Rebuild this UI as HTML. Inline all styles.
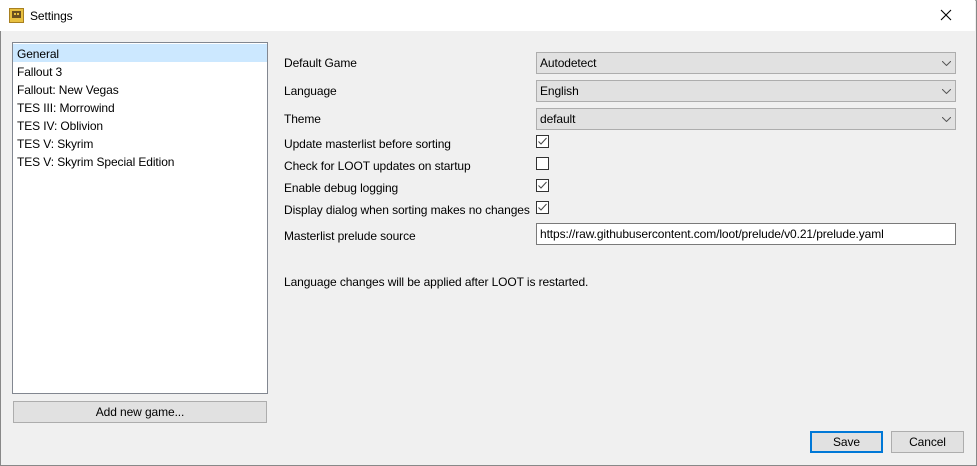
<!DOCTYPE html><html><head><style>
*{margin:0;padding:0;box-sizing:border-box}
body{width:977px;height:466px;font-family:"Liberation Sans",sans-serif;font-size:12px;color:#000;position:relative;overflow:hidden;background:#f0f0f0;letter-spacing:-0.1px}
.win{position:absolute;left:0;top:0;width:977px;height:466px;border:1px solid #888;border-top:1px solid #aaa}
.title{position:absolute;left:0;top:0;width:975px;height:31px;background:#fff}
.a{position:absolute;white-space:nowrap}
.lb{position:absolute;left:12px;top:42px;width:256px;height:352px;background:#fff;border:1px solid #828790;padding-top:1px}
.lb div{height:18px;line-height:20px;padding-left:4px}
.btn{position:absolute;background:#e1e1e1;border:1px solid #adadad;text-align:center;line-height:20px}
.cb{position:absolute;left:536px;height:22px;background:#e1e1e1;border:1px solid #adadad;line-height:20px;padding-left:3px;width:420px}
.cb svg{position:absolute;right:4px;top:8px}
.ck{position:absolute;left:536px;width:13px;height:13px;border:1px solid #333;background:#fff}
</style></head><body>
<div class="win"></div>
<div class="title">
<svg class="a" style="left:9px;top:8px" width="15" height="15"><rect x="0.5" y="0.5" width="14" height="14" fill="#e8c040" stroke="#a88020"/><rect x="3" y="3" width="9" height="7" fill="#6a5020"/><rect x="5" y="5" width="2" height="2" fill="#e8c040"/><rect x="8" y="5" width="2" height="2" fill="#e8c040"/></svg>
<div class="a" style="left:30px;top:9px">Settings</div>
<svg class="a" style="left:940px;top:9px" width="12" height="12"><path d="M1 1L11 11M11 1L1 11" stroke="#000" stroke-width="1.1"/></svg>
</div>
<div class="lb">
<div style="background:#cce8ff">General</div><div>Fallout 3</div><div>Fallout: New Vegas</div><div>TES III: Morrowind</div><div>TES IV: Oblivion</div><div>TES V: Skyrim</div><div>TES V: Skyrim Special Edition</div>
</div>
<div class="btn" style="left:13px;top:401px;width:254px;height:22px">Add new game...</div>
<div class="a" style="left:284px;top:56px">Default Game</div>
<div class="a" style="left:284px;top:84px">Language</div>
<div class="a" style="left:284px;top:112px">Theme</div>
<div class="a" style="left:284px;top:137px">Update masterlist before sorting</div>
<div class="a" style="left:284px;top:159px">Check for LOOT updates on startup</div>
<div class="a" style="left:284px;top:181px">Enable debug logging</div>
<div class="a" style="left:284px;top:203px">Display dialog when sorting makes no changes</div>
<div class="a" style="left:284px;top:229px">Masterlist prelude source</div>
<div class="cb" style="top:52px">Autodetect<svg width="9" height="5"><path d="M0 0L4.5 4.5L9 0" fill="none" stroke="#555"/></svg></div>
<div class="cb" style="top:80px">English<svg width="9" height="5"><path d="M0 0L4.5 4.5L9 0" fill="none" stroke="#555"/></svg></div>
<div class="cb" style="top:108px">default<svg width="9" height="5"><path d="M0 0L4.5 4.5L9 0" fill="none" stroke="#555"/></svg></div>
<div class="ck" style="top:135px"><svg width="11" height="11"><path d="M1.5 5.5L4 8L9.5 2" fill="none" stroke="#444"/></svg></div>
<div class="ck" style="top:157px"></div>
<div class="ck" style="top:179px"><svg width="11" height="11"><path d="M1.5 5.5L4 8L9.5 2" fill="none" stroke="#444"/></svg></div>
<div class="ck" style="top:201px"><svg width="11" height="11"><path d="M1.5 5.5L4 8L9.5 2" fill="none" stroke="#444"/></svg></div>
<div class="a" style="left:536px;top:223px;width:420px;height:22px;background:#fff;border:1px solid #7a7a7a;line-height:20px;padding-left:3px">https://raw.githubusercontent.com/loot/prelude/v0.21/prelude.yaml</div>
<div class="a" style="left:284px;top:275px">Language changes will be applied after LOOT is restarted.</div>
<div class="btn" style="left:810px;top:431px;width:73px;height:22px;border:2px solid #0078d7;line-height:18px">Save</div>
<div class="btn" style="left:891px;top:431px;width:73px;height:22px">Cancel</div>
</body></html>
